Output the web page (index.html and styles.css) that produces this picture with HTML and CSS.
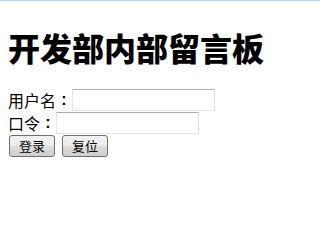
FILE: index.html
```html
<!DOCTYPE html>
<html lang="zh-CN">
<head>
<meta charset="utf-8">
<title>开发部内部留言板</title>
<link rel="stylesheet" href="styles.css">
</head>
<body>
<div class="page">
  <h1 class="title">开发部内部留言板</h1>
  <form class="login">
    <div class="row"><label class="label">用户名<span class="colon">:</span></label><input class="field" type="text"></div>
    <div class="row"><label class="label">口令<span class="colon">:</span></label><input class="field" type="password"></div>
    <div class="row actions"><button class="btn" type="button">登录</button><button class="btn" type="reset">复位</button></div>
  </form>
</div>
</body>
</html>
```
FILE: styles.css
```css
html, body {
  margin: 0;
  padding: 0;
  background: #ffffff;
}
body {
  border-top: 1px solid #b9cfe8;
  font-family: "Noto Sans CJK SC", "Noto Sans", sans-serif;
  color: #000000;
}
.page {
  padding: 0 8px;
}
.title {
  margin: 30px 0 25px 0;
  font-size: 32px;
  line-height: 32px;
  font-weight: 900;
}
.login {
  display: flex;
  flex-direction: column;
  margin: 0;
}
.row {
  display: flex;
  align-items: center;
  height: 23px;
}
.label {
  display: flex;
  align-items: center;
  font-size: 16px;
  line-height: 16px;
}
.colon {
  display: inline-block;
  width: 16px;
  text-align: center;
  font-family: "Liberation Sans", sans-serif;
  font-weight: bold;
}
.field {
  box-sizing: border-box;
  width: 143px;
  height: 22px;
  margin: 0;
  padding: 1px 2px;
  border: 1px solid #e2e6ec;
  border-top-color: #abadb3;
  background: #ffffff;
  font-size: 13px;
  outline: none;
}
.actions {
  gap: 7px;
  padding-left: 1px;
}
.btn {
  box-sizing: border-box;
  width: 46px;
  height: 22px;
  margin: 0;
  padding: 0;
  border: 1px solid #707070;
  border-radius: 3px;
  background: linear-gradient(#f2f2f2 0%, #ebebeb 50%, #dddddd 51%, #cfcfcf 100%);
  font-family: "Noto Sans CJK SC", sans-serif;
  font-size: 13px;
  line-height: 18px;
  color: #000000;
}
```
